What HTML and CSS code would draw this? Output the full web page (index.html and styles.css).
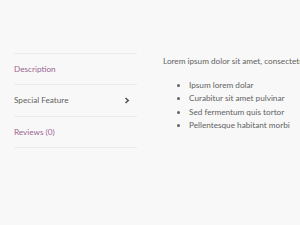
FILE: index.html
```html
<!DOCTYPE html>
<html>
<head>
<meta charset="utf-8">
<link rel="stylesheet" href="styles.css">
</head>
<body>
<div class="page">
  <ul class="tabs">
    <li class="tab active"><a>Description</a></li>
    <li class="tab"><a>Special Feature</a><svg class="chev" width="6" height="7" viewBox="0 0 6 7"><path d="M1.5 1 L4.2 3.5 L1.5 6" fill="none" stroke="#555" stroke-width="1.6"/></svg></li>
    <li class="tab active"><a>Reviews (0)</a></li>
  </ul>
  <div class="panel">
    <p class="intro">Lorem ipsum dolor sit amet, consectetur</p>
    <ul class="list">
      <li>Ipsum lorem dolar</li>
      <li>Curabitur sit amet pulvinar</li>
      <li>Sed fermentum quis tortor</li>
      <li>Pellentesque habitant morbi</li>
    </ul>
  </div>
</div>
</body>
</html>
```
FILE: styles.css
```css
html, body { margin: 0; padding: 0; }
body {
  background: #f8f8f8;
  font-family: Lato, "Liberation Sans", sans-serif;
  font-size: 8.2px;
  color: #626262;
  width: 300px;
  height: 225px;
  overflow: hidden;
}
.page {
  display: flex;
  padding: 53px 0 0 14px;
  gap: 26px;
}
.tabs {
  list-style: none;
  margin: 0;
  padding: 0;
  width: 123px;
  flex: none;
  border-top: 1px solid #ebebeb;
}
.tab {
  height: 30.3px;
  border-bottom: 1px solid #ebebeb;
  display: flex;
  align-items: center;
  justify-content: space-between;
  padding-right: 7px;
}
.tab.active a { color: #9b6593; }
.chev { display: block; }
.panel {
  flex: 1;
  min-width: 0;
  overflow: hidden;
  white-space: nowrap;
}
.intro { margin: 2px 0 0 0; line-height: 12px; }
.list {
  margin: 12px 0 0 0;
  padding-left: 26px;
  line-height: 13.4px;
}
```
